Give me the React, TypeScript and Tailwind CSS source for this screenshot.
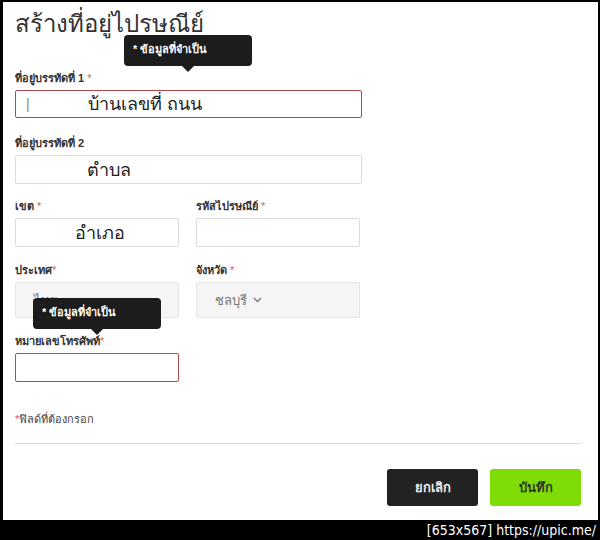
import React from "react";

const font = { fontFamily: '"Liberation Sans", "Noto Sans", Tahoma, sans-serif' };

function Label({ text, star = true, space = true }: { text: string; star?: boolean; space?: boolean }) {
  return (
    <div className="h-[16px] leading-[16px] text-[11px] font-bold text-[#333] whitespace-nowrap">
      {text}
      {star && <span className="text-[#e05555] font-normal">{space ? " *" : "*"}</span>}
    </div>
  );
}

function Tooltip({ className }: { className: string }) {
  return (
    <div className={`absolute w-[128px] h-[31px] rounded-[4px] bg-[#1c1c1c] ${className}`}>
      <div className="pl-[9px] pt-[7px] text-[11px] leading-[14px] font-bold text-white whitespace-nowrap">* ข้อมูลที่จำเป็น</div>
      <div className="absolute left-1/2 -translate-x-1/2 top-[31px] w-0 h-0 border-l-[6px] border-r-[6px] border-t-[6px] border-l-transparent border-r-transparent border-t-[#1c1c1c]" />
    </div>
  );
}

export default function App() {
  return (
    <div className="w-[600px] h-[540px] bg-black flex flex-col" style={font}>
      <div className="ml-[3px] mt-[2px] w-[595px] h-[518px] bg-white relative pl-[12px]">
        <div className="pt-[6px] h-[40px] text-[24px] leading-[32px] text-[#333]">สร้างที่อยู่ไปรษณีย์</div>

        <div className="mt-[28px]">
          <Label text="ที่อยู่บรรทัดที่ 1" space />
          <div className="mt-[4px] w-[347px] h-[28px] border border-[#b34a4a] rounded-[2px] flex items-center">
            <span className="ml-[10px] text-[14px] text-[#888] leading-none">|</span>
            <span className="ml-[58px] text-[18px] text-[#222] leading-none">บ้านเลขที่ ถนน</span>
          </div>
        </div>

        <div className="mt-[17px]">
          <Label text="ที่อยู่บรรทัดที่ 2" star={false} />
          <div className="mt-[4px] w-[347px] h-[29px] border border-[#dcdcdc] rounded-[2px] flex items-center">
            <span className="ml-[71px] text-[18px] text-[#222] leading-none">ตำบล</span>
          </div>
        </div>

        <div className="mt-[14px] flex gap-[17px]">
          <div>
            <Label text="เขต" />
            <div className="mt-[4px] w-[164px] h-[29px] border border-[#dcdcdc] rounded-[2px] flex items-center">
              <span className="ml-[59px] text-[18px] text-[#222] leading-none">อำเภอ</span>
            </div>
          </div>
          <div>
            <Label text="รหัสไปรษณีย์" />
            <div className="mt-[4px] w-[164px] h-[29px] border border-[#dcdcdc] rounded-[2px]" />
          </div>
        </div>

        <div className="mt-[15px] flex gap-[17px]">
          <div>
            <Label text="ประเทศ" space={false} />
            <div className="mt-[4px] w-[164px] h-[36px] border border-[#e6e6e6] bg-[#f5f5f5] rounded-[2px] flex items-center">
              <span className="ml-[18px] text-[13px] text-[#777] leading-none">ไทย</span>
            </div>
          </div>
          <div>
            <Label text="จังหวัด" />
            <div className="mt-[4px] w-[164px] h-[36px] border border-[#e6e6e6] bg-[#f5f5f5] rounded-[2px] flex items-center">
              <span className="ml-[18px] text-[13px] text-[#777] leading-none">ชลบุรี</span>
              <svg className="ml-[6px]" width="9" height="6" viewBox="0 0 9 6" fill="none">
                <path d="M1 1l3.5 3.5L8 1" stroke="#777" strokeWidth="1.3" />
              </svg>
            </div>
          </div>
        </div>

        <div className="mt-[15px]">
          <Label text="หมายเลขโทรศัพท์" space={false} />
          <div className="mt-[4px] w-[164px] h-[29px] border border-[#b34a4a] rounded-[2px]" />
        </div>

        <div className="mt-[30px] h-[14px] leading-[14px] text-[11px] text-[#444]">
          <span className="text-[#e05555]">*</span>ฟิลด์ที่ต้องกรอก
        </div>

        <div className="mt-[17px] w-[566px] h-px bg-[#d9d9d9]" />

        <div className="mt-[25px] w-[566px] flex justify-end gap-[12px]">
          <button className="w-[91px] h-[37px] rounded-[3px] bg-[#222] text-[#eee] text-[13px] font-bold">ยกเลิก</button>
          <button className="w-[91px] h-[37px] rounded-[3px] bg-[#7fdc04] text-[#333] text-[13px] font-bold">บันทึก</button>
        </div>

        <Tooltip className="left-[121px] top-[33px]" />
        <Tooltip className="left-[30px] top-[296px]" />
      </div>
      <div className="h-[20px] flex items-center justify-end pr-[4px] text-white text-[14px] leading-none" style={{ fontFamily: '"DejaVu Sans Condensed", "DejaVu Sans", sans-serif' }}>
        [653x567] https://upic.me/
      </div>
    </div>
  );
}
